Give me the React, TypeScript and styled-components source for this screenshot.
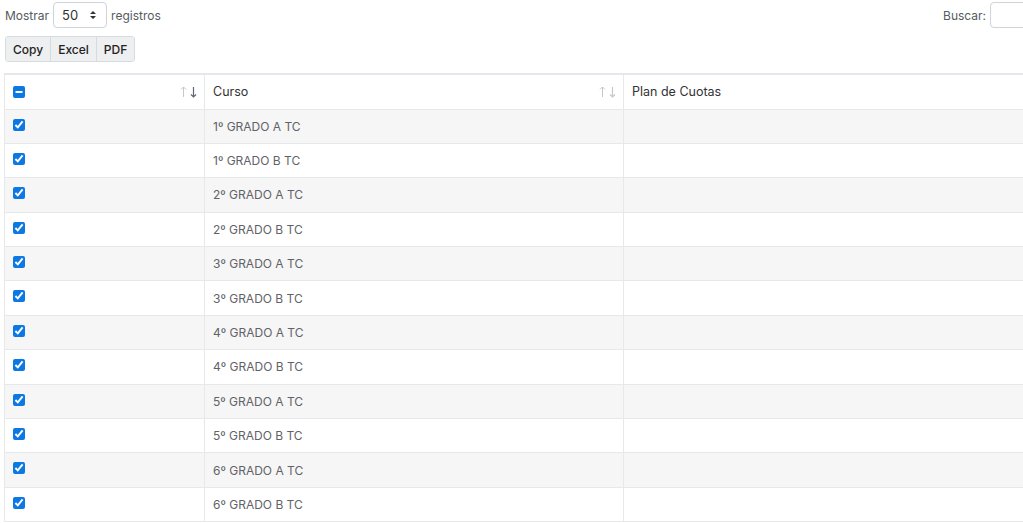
import { useEffect, useRef } from "react";
import styled, { createGlobalStyle } from "styled-components";

const cursos = [
  "1º GRADO A TC",
  "1º GRADO B TC",
  "2º GRADO A TC",
  "2º GRADO B TC",
  "3º GRADO A TC",
  "3º GRADO B TC",
  "4º GRADO A TC",
  "4º GRADO B TC",
  "5º GRADO A TC",
  "5º GRADO B TC",
  "6º GRADO A TC",
  "6º GRADO B TC",
];

const SortIcons = ({ active }: { active?: boolean }) => (
  <SortWrap>
    <svg width="7" height="12" viewBox="0 0 7 12">
      <path d="M3.5 1 L3.5 11 M1 3.5 L3.5 1 L6 3.5" stroke="#c4c8cc" strokeWidth="1" fill="none" />
    </svg>
    <svg width="7" height="12" viewBox="0 0 7 12">
      <path
        d="M3.5 1 L3.5 11 M1 8.5 L3.5 11 L6 8.5"
        stroke={active ? "#5f6770" : "#c4c8cc"}
        strokeWidth="1.2"
        fill="none"
      />
    </svg>
  </SortWrap>
);

const App = () => {
  const allRef = useRef<HTMLInputElement>(null);

  useEffect(() => {
    if (allRef.current) allRef.current.indeterminate = true;
  }, []);

  return (
    <>
      <GlobalStyle />
      <Page>
        <TopBar>
          <Label>
            Mostrar
            <SelectWrap>
              <Select defaultValue="50">
                <option value="10">10</option>
                <option value="25">25</option>
                <option value="50">50</option>
                <option value="100">100</option>
              </Select>
              <Caret width="8" height="10" viewBox="0 0 8 10">
                <path d="M1 4 L4 1 L7 4 Z M1 6 L4 9 L7 6 Z" fill="#333" />
              </Caret>
            </SelectWrap>
            registros
          </Label>
          <Label>
            Buscar:
            <SearchInput type="search" />
          </Label>
        </TopBar>

        <ButtonGroup>
          <ExportButton>Copy</ExportButton>
          <ExportButton>Excel</ExportButton>
          <ExportButton>PDF</ExportButton>
        </ButtonGroup>

        <Table>
          <colgroup>
            <col style={{ width: 200 }} />
            <col style={{ width: 419 }} />
            <col />
          </colgroup>
          <thead>
            <HeadRow>
              <Th>
                <HeadCell>
                  <Check ref={allRef} type="checkbox" readOnly />
                  <SortIcons active />
                </HeadCell>
              </Th>
              <Th>
                <HeadCell>
                  Curso
                  <SortIcons />
                </HeadCell>
              </Th>
              <Th>Plan de Cuotas</Th>
            </HeadRow>
          </thead>
          <tbody>
            {cursos.map((c, i) => (
              <Row key={c} $striped={i % 2 === 0}>
                <CheckTd>
                  <Check type="checkbox" defaultChecked />
                </CheckTd>
                <Td>{c}</Td>
                <Td />
              </Row>
            ))}
          </tbody>
        </Table>
      </Page>
    </>
  );
};

export default App;

const GlobalStyle = createGlobalStyle`
  body {
    margin: 0;
    font-family: "Inter", "Open Sans", sans-serif;
    color: #555b61;
    background: #fff;
    overflow: hidden;
  }
`;

const Page = styled.div`
  width: 1140px;
  padding: 2px 0 0 4px;
  box-sizing: border-box;
`;

const TopBar = styled.div`
  display: flex;
  justify-content: space-between;
  align-items: center;
  height: 26px;
`;

const Label = styled.label`
  display: flex;
  align-items: center;
  gap: 4px;
  font-size: 12px;
  color: #555b61;
  padding-left: 1px;
`;

const SelectWrap = styled.span`
  position: relative;
  display: inline-flex;
`;

const Select = styled.select`
  appearance: none;
  width: 54px;
  height: 26px;
  border: 1px solid #ced4da;
  border-radius: 4px;
  padding: 0 0 0 8px;
  font-family: inherit;
  font-size: 13px;
  color: #333;
  background: #fff;
  outline: none;
`;

const Caret = styled.svg`
  position: absolute;
  right: 10px;
  top: 8px;
  pointer-events: none;
`;

const SearchInput = styled.input`
  width: 150px;
  height: 26px;
  box-sizing: border-box;
  border: 1px solid #ced4da;
  border-radius: 4px;
  outline: none;
`;

const ButtonGroup = styled.div`
  display: inline-flex;
  margin: 8px 0 0 1px;
  border: 1px solid #d8dbde;
  border-radius: 3px;
  overflow: hidden;
`;

const ExportButton = styled.button`
  height: 24px;
  padding: 0 7px;
  border: none;
  border-right: 1px solid #d8dbde;
  background: #eeeff0;
  font-family: inherit;
  font-size: 12px;
  font-weight: 500;
  color: #222;
  cursor: pointer;

  &:last-child {
    border-right: none;
  }
`;

const Table = styled.table`
  margin-top: 11px;
  width: 100%;
  border-collapse: collapse;
  table-layout: fixed;
  border-top: 2px solid #e4e7eb;
  border-left: 1px solid #e6e8ea;
  font-size: 12px;
`;

const HeadRow = styled.tr`
  height: 35px;
`;

const Th = styled.th`
  padding: 0 8px;
  text-align: left;
  font-weight: 400;
  font-size: 12.5px;
  color: #333;
  border-right: 1px solid #e6e8ea;
  border-bottom: 1px solid #e6e8ea;
`;

const HeadCell = styled.div`
  display: flex;
  justify-content: space-between;
  align-items: center;
`;

const SortWrap = styled.span`
  display: flex;
  gap: 3px;
  margin-right: -1px;
`;

const Row = styled.tr<{ $striped: boolean }>`
  height: 34.4px;
  background: ${(p) => (p.$striped ? "#f6f6f6" : "#fff")};
`;

const Td = styled.td`
  padding: 0 8px;
  color: #5f6368;
  border-right: 1px solid #e6e8ea;
  border-bottom: 1px solid #e6e8ea;
`;

const CheckTd = styled(Td)`
  vertical-align: top;
  padding-top: 9px;
`;

const Check = styled.input`
  width: 12px;
  height: 12px;
  margin: 0;
  accent-color: #0b78e3;
  display: block;
`;
